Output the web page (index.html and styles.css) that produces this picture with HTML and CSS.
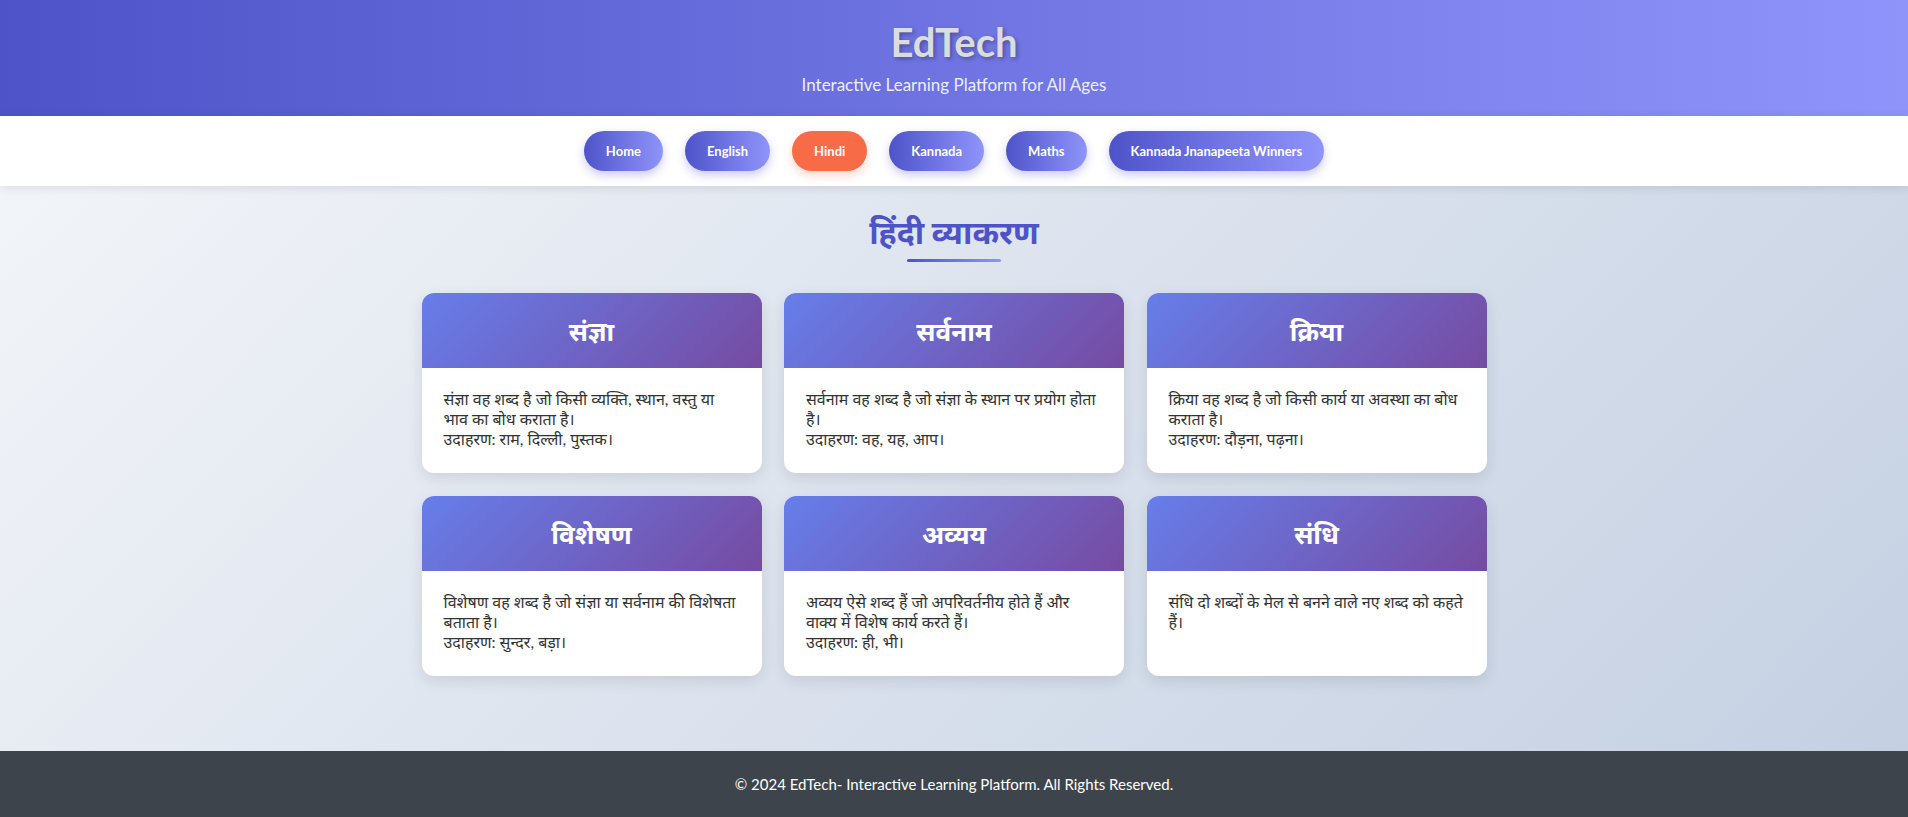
FILE: index.html
```html
<!DOCTYPE html>
<html lang="hi">
<head>
<meta charset="utf-8">
<title>EdTech - Hindi</title>
<link rel="stylesheet" href="styles.css">
</head>
<body>
<header class="site-header">
  <h1 class="brand">EdTech</h1>
  <p class="tagline">Interactive Learning Platform for All Ages</p>
</header>
<nav class="site-nav">
  <a class="nav-btn" href="#">Home</a>
  <a class="nav-btn" href="#">English</a>
  <a class="nav-btn active" href="#">Hindi</a>
  <a class="nav-btn" href="#">Kannada</a>
  <a class="nav-btn" href="#">Maths</a>
  <a class="nav-btn" href="#">Kannada Jnanapeeta Winners</a>
</nav>
<main class="content">
  <div class="section-title">
    <h2>हिंदी व्याकरण</h2>
    <div class="title-bar"></div>
  </div>
  <div class="card-grid">
    <div class="card">
      <div class="card-head"><h3>संज्ञा</h3></div>
      <div class="card-body"><p>संज्ञा वह शब्द है जो किसी व्यक्ति, स्थान, वस्तु या भाव का बोध कराता है।<br>उदाहरण: राम, दिल्ली, पुस्तक।</p></div>
    </div>
    <div class="card">
      <div class="card-head"><h3>सर्वनाम</h3></div>
      <div class="card-body"><p>सर्वनाम वह शब्द है जो संज्ञा के स्थान पर प्रयोग होता है।<br>उदाहरण: वह, यह, आप।</p></div>
    </div>
    <div class="card">
      <div class="card-head"><h3>क्रिया</h3></div>
      <div class="card-body"><p>क्रिया वह शब्द है जो किसी कार्य या अवस्था का बोध कराता है।<br>उदाहरण: दौड़ना, पढ़ना।</p></div>
    </div>
    <div class="card">
      <div class="card-head"><h3>विशेषण</h3></div>
      <div class="card-body"><p>विशेषण वह शब्द है जो संज्ञा या सर्वनाम की विशेषता बताता है।<br>उदाहरण: सुन्दर, बड़ा।</p></div>
    </div>
    <div class="card">
      <div class="card-head"><h3>अव्यय</h3></div>
      <div class="card-body"><p>अव्यय ऐसे शब्द हैं जो अपरिवर्तनीय होते हैं और वाक्य में विशेष कार्य करते हैं।<br>उदाहरण: ही, भी।</p></div>
    </div>
    <div class="card">
      <div class="card-head"><h3>संधि</h3></div>
      <div class="card-body"><p>संधि दो शब्दों के मेल से बनने वाले नए शब्द को कहते हैं।</p></div>
    </div>
  </div>
</main>
<footer class="site-footer">
  <p>© 2024 EdTech- Interactive Learning Platform. All Rights Reserved.</p>
</footer>
</body>
</html>
```
FILE: styles.css
```css
* { box-sizing: border-box; }
html, body { margin: 0; padding: 0; }
body {
  font-family: Lato, "Noto Sans", "Noto Sans Devanagari", sans-serif;
  color: #333;
  background: linear-gradient(135deg, #f5f7fa 0%, #c3cfe2 100%);
  min-height: 817px;
  display: flex;
  flex-direction: column;
}
.site-header {
  height: 116px;
  background: linear-gradient(to right, #4e54c8, #8f94fb);
  display: flex;
  flex-direction: column;
  align-items: center;
  padding-top: 15px;
}
.brand {
  margin: 0;
  font-size: 40px;
  line-height: 54px;
  font-weight: 700;
  color: #dcdcdc;
  text-shadow: 2px 2px 4px rgba(0,0,0,0.3);
}
.tagline {
  margin: 4px 0 0;
  font-size: 17px;
  line-height: 24px;
  color: #eceeff;
}
.site-nav {
  height: 70px;
  background: #fff;
  display: flex;
  justify-content: center;
  align-items: center;
  gap: 22px;
  box-shadow: 0 2px 10px rgba(0,0,0,0.1);
  position: relative;
}
.nav-btn {
  height: 40px;
  padding: 0 22px;
  display: flex;
  align-items: center;
  border-radius: 25px;
  background: linear-gradient(to right, #4e54c8, #8f94fb);
  color: #fff;
  font-size: 13px;
  font-weight: 700;
  text-decoration: none;
  box-shadow: 0 4px 10px rgba(78,84,200,0.3);
}
.nav-btn.active {
  background: #f76c46;
  box-shadow: 0 4px 10px rgba(247,108,70,0.3);
}
.content {
  flex: 1;
  padding: 27px 0 75px;
}
.section-title {
  display: flex;
  flex-direction: column;
  align-items: center;
}
.section-title h2 {
  margin: 0;
  font-size: 32px;
  line-height: 38px;
  font-weight: 700;
  color: #4e54c8;
}
.title-bar {
  width: 94px;
  height: 3px;
  margin-top: 8px;
  border-radius: 2px;
  background: linear-gradient(to right, #4e54c8, #8f94fb);
}
.card-grid {
  margin-top: 31px;
  display: grid;
  grid-template-columns: repeat(3, 340px);
  gap: 23px 22.5px;
  justify-content: center;
}
.card {
  background: #fff;
  border-radius: 12px;
  overflow: hidden;
  box-shadow: 0 5px 15px rgba(0,0,0,0.1);
  min-height: 180px;
}
.card-head {
  height: 75px;
  display: flex;
  align-items: center;
  justify-content: center;
  background: linear-gradient(135deg, #667eea 0%, #764ba2 100%);
}
.card-head h3 {
  margin: 0;
  color: #fff;
  font-size: 26px;
  font-weight: 700;
}
.card-body {
  padding: 21px 23px 20px 22px;
}
.card-body p {
  margin: 0;
  font-size: 16px;
  line-height: 20px;
  color: #333;
}
.site-footer {
  height: 66px;
  background: #3e444c;
  display: flex;
  align-items: center;
  justify-content: center;
}
.site-footer p {
  margin: 0;
  color: #fff;
  font-size: 15px;
}
```
